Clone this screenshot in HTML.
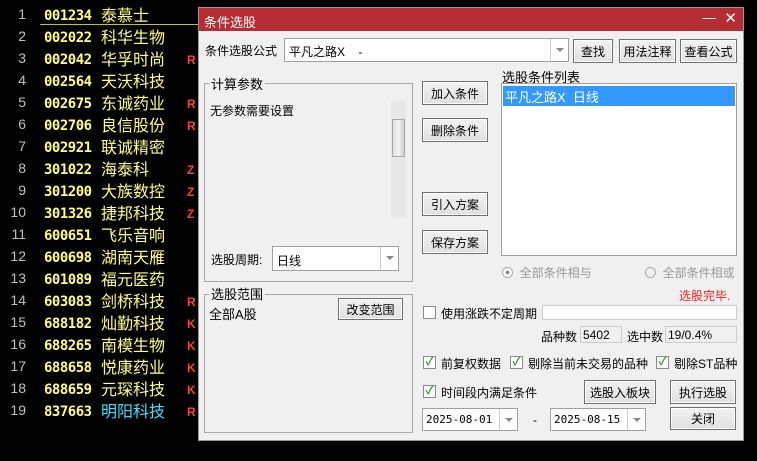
<!DOCTYPE html>
<html><head><meta charset="utf-8"><style>
*{box-sizing:border-box;margin:0;padding:0}
body{width:757px;height:461px;background:#000;position:relative;overflow:hidden;font-family:"Liberation Sans","Noto Sans CJK SC",sans-serif;}
.a{position:absolute;white-space:nowrap}
.idx{color:#c0c0c0;font-size:14px;width:26px;text-align:right;left:0}
.code{color:#ffff80;font-weight:bold;font-size:14px;left:44px;font-family:"DejaVu Sans Mono","Liberation Mono",monospace;letter-spacing:-0.5px}
.nm{color:#ffff80;font-size:16px;left:101px;font-family:"Noto Sans CJK SC",sans-serif;}
.fl{color:#ff4040;font-weight:bold;font-size:12px;left:187px}
#dlg{position:absolute;left:198px;top:7px;width:546px;height:434px;background:#f0f0f0;border:1px solid #999;font-size:12px;color:#000}
.t{position:absolute;white-space:nowrap;font-size:12px}
.btn{position:absolute;border:1px solid #707070;background:linear-gradient(#f2f2f2,#e0e0e0);box-shadow:inset 0 0 0 1px #fff;font-size:12px;text-align:center;display:flex;align-items:center;justify-content:center}
.box{position:absolute;background:#fff;border:1px solid #a0a0a0}
.grp{position:absolute;border:1px solid #a8a8a8}
.cb{position:absolute;width:13px;height:13px;border:1px solid #8a8a8a;background:#fff;font-size:11px;color:#2a9a2a;line-height:11px;text-align:center;font-weight:bold}
.dd{position:absolute;right:0;top:0;bottom:0;width:18px;border-left:1px solid #ccc}
.dd:after{content:"";position:absolute;left:5px;top:9px;border:4px solid transparent;border-top:4px solid #888}
</style></head><body>
<div class="a" style="left:40px;top:24px;width:160px;height:1px;background:#c8c800"></div>
<div id="rows"></div>
<script>
var d=[["001234","泰慕士",""],["002022","科华生物",""],["002042","华孚时尚","R"],["002564","天沃科技",""],["002675","东诚药业","R"],["002706","良信股份","R"],["002921","联诚精密",""],["301022","海泰科","Z"],["301200","大族数控","Z"],["301326","捷邦科技","Z"],["600651","飞乐音响",""],["600698","湖南天雁",""],["601089","福元医药",""],["603083","剑桥科技","R"],["688182","灿勤科技","K"],["688265","南模生物","K"],["688658","悦康药业","K"],["688659","元琛科技","K"],["837663","明阳科技","R"]];
var h="";for(var i=0;i<d.length;i++){var y=5+i*22;h+='<div class="a idx" style="top:'+(y+1)+'px">'+(i+1)+'</div><div class="a code" style="top:'+(y+3)+'px">'+d[i][0]+'</div><div class="a nm" style="top:'+(y-3)+'px'+(i==18?';color:#40e0ff':'')+'">'+d[i][1]+'</div><div class="a fl" style="top:'+(y+4)+'px">'+d[i][2]+'</div>';}
document.getElementById("rows").innerHTML=h;
</script>
<div id="dlg">
<div style="position:absolute;left:0;top:0;right:0;height:23px;background:#b52d33;color:#fff;font-size:13px;padding:4px 0 0 5px">条件选股<span style="position:absolute;right:27px;top:1px;font-size:14px">—</span><span style="position:absolute;right:6px;top:1px;font-size:15px">✕</span></div>
<div class="t" style="left:6px;top:34px">条件选股公式</div>
<div class="box" style="left:85px;top:30px;width:285px;height:24px"><span class="t" style="left:4px;top:4px">平凡之路X&nbsp;&nbsp;&nbsp;&nbsp;-</span><div class="dd"></div></div>
<div class="btn" style="left:374px;top:31px;width:40px;height:24px">查找</div>
<div class="btn" style="left:420px;top:31px;width:57px;height:24px">用法注释</div>
<div class="btn" style="left:481px;top:31px;width:57px;height:24px">查看公式</div>
<div class="grp" style="left:5px;top:75px;width:209px;height:199px"></div>
<div class="t" style="left:10px;top:66px;background:#f0f0f0;padding:0 2px;font-size:13px">计算参数</div>
<div class="t" style="left:11px;top:94px">无参数需要设置</div>
<div style="position:absolute;left:192px;top:93px;width:15px;height:117px;background:#e8e8e8"><div style="position:absolute;left:1px;top:18px;width:13px;height:38px;background:linear-gradient(90deg,#ddd,#f4f4f4,#ccc);border:1px solid #aaa"></div></div>
<div class="t" style="left:12px;top:243px">选股周期:</div>
<div class="box" style="left:73px;top:238px;width:127px;height:25px"><span class="t" style="left:4px;top:5px">日线</span><div class="dd"></div></div>
<div class="grp" style="left:5px;top:286px;width:209px;height:139px"></div>
<div class="t" style="left:10px;top:276px;background:#f0f0f0;padding:0 2px;font-size:13px">选股范围</div>
<div class="t" style="left:10px;top:296px;font-size:13px">全部A股</div>
<div class="btn" style="left:139px;top:290px;width:65px;height:22px">改变范围</div>
<div class="btn" style="left:223px;top:73px;width:66px;height:24px">加入条件</div>
<div class="btn" style="left:223px;top:110px;width:66px;height:24px">删除条件</div>
<div class="btn" style="left:223px;top:184px;width:66px;height:24px">引入方案</div>
<div class="btn" style="left:223px;top:222px;width:66px;height:24px">保存方案</div>
<div class="t" style="left:303px;top:59px;font-size:13px">选股条件列表</div>
<div class="box" style="left:302px;top:75px;width:236px;height:173px"><div style="position:absolute;left:1px;top:2px;right:1px;height:20px;background:#3399ff;color:#fff;font-size:13px;padding:1px 0 0 2px">平凡之路X&nbsp;&nbsp;日线</div></div>
<div class="t" style="left:303px;top:256px;color:#999"><span style="display:inline-block;width:11px;height:11px;border:1px solid #aaa;border-radius:50%;vertical-align:-1px;background:radial-gradient(#888 25%,#fff 35%)"></span>&nbsp;&nbsp;全部条件相与</div>
<div class="t" style="left:446px;top:256px;color:#999"><span style="display:inline-block;width:11px;height:11px;border:1px solid #aaa;border-radius:50%;vertical-align:-1px"></span>&nbsp;&nbsp;全部条件相或</div>
<div class="t" style="left:480px;top:279px;color:#ff2020;font-size:12px">选股完毕.</div>
<div class="cb" style="left:224px;top:298px"></div>
<div class="t" style="left:242px;top:297px">使用涨跌不定周期</div>
<div class="box" style="left:343px;top:297px;width:195px;height:15px;border-color:#ccc"></div>
<div class="t" style="left:342px;top:320px">品种数</div>
<div style="position:absolute;left:381px;top:318px;width:42px;height:17px;border:1px solid #ccc;font-size:12px;padding:1px 2px">5402</div>
<div class="t" style="left:428px;top:320px">选中数</div>
<div style="position:absolute;left:466px;top:318px;width:72px;height:17px;border:1px solid #ccc;font-size:12px;padding:1px 2px">19/0.4%</div>
<div class="cb" style="left:224px;top:348px">✓</div><div class="t" style="left:242px;top:347px">前复权数据</div>
<div class="cb" style="left:311px;top:348px">✓</div><div class="t" style="left:329px;top:347px">剔除当前未交易的品种</div>
<div class="cb" style="left:457px;top:348px">✓</div><div class="t" style="left:475px;top:347px">剔除ST品种</div>
<div class="cb" style="left:224px;top:377px">✓</div><div class="t" style="left:242px;top:376px">时间段内满足条件</div>
<div class="btn" style="left:385px;top:372px;width:72px;height:24px">选股入板块</div>
<div class="btn" style="left:471px;top:372px;width:66px;height:24px">执行选股</div>
<div class="box" style="left:223px;top:400px;width:96px;height:23px"><span class="t" style="left:3px;top:4px;font-family:'DejaVu Sans Mono',monospace;font-size:11px">2025-08-01</span><div class="dd"></div></div>
<div class="t" style="left:334px;top:405px">-</div>
<div class="box" style="left:351px;top:400px;width:96px;height:23px"><span class="t" style="left:3px;top:4px;font-family:'DejaVu Sans Mono',monospace;font-size:11px">2025-08-15</span><div class="dd"></div></div>
<div class="btn" style="left:471px;top:399px;width:66px;height:23px">关闭</div>
</div>
</body></html>
